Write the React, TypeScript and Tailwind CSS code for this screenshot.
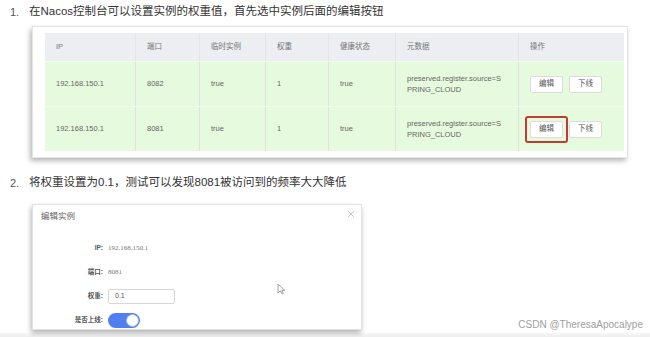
import clsx from "clsx";

const cn = clsx;

const COLS = [
  { title: "IP", w: "w-[91px]" },
  { title: "端口", w: "w-[64px]" },
  { title: "临时实例", w: "w-[66px]" },
  { title: "权重", w: "w-[63px]" },
  { title: "健康状态", w: "w-[67px]" },
  { title: "元数据", w: "w-[123px]" },
  { title: "操作", w: "w-[105px]" },
];

const ROWS = [
  { ip: "192.168.150.1", port: "8082", highlight: false },
  { ip: "192.168.150.1", port: "8081", highlight: true },
];

const SANS = "font-['Microsoft_YaHei','Liberation_Sans','Noto_Sans_CJK_SC',sans-serif]";

function Cell({ w, children, className }: { w: string; children?: React.ReactNode; className?: string }) {
  return (
    <div className={cn("flex items-center pl-[11px] border-r border-[#dde3dc] last:border-r-0 shrink-0", w, className)}>
      {children}
    </div>
  );
}

function SmallButton({ label }: { label: string }) {
  return (
    <div className="w-[33px] h-[17px] bg-white border border-[#dcdcdc] rounded-[2px] flex items-center justify-center text-[7.5px] text-[#555]">
      {label}
    </div>
  );
}

function InstanceTable() {
  return (
    <div className="ml-[32px] mt-[2px] w-[596px] h-[132px] bg-white border border-[#e4e4e4] shadow-[-2px_3px_5px_rgba(0,0,0,0.28)] pl-[12px] pt-[6px]">
      <div className="w-[579px] text-[7.5px] text-[#666]">
        <div className="flex h-[28px] bg-[#eceef1]">
          {COLS.map((c) => (
            <Cell key={c.title} w={c.w} className="border-[#e2e4e7] text-[#777]">
              {c.title}
            </Cell>
          ))}
        </div>
        {ROWS.map((r, i) => (
          <div key={i} className="flex h-[45px] bg-[#e6fbdd] border-t border-[#f2fbee]">
            <Cell w={COLS[0].w}>{r.ip}</Cell>
            <Cell w={COLS[1].w}>{r.port}</Cell>
            <Cell w={COLS[2].w}>true</Cell>
            <Cell w={COLS[3].w}>1</Cell>
            <Cell w={COLS[4].w}>true</Cell>
            <Cell w={COLS[5].w} className="leading-[11px]">
              <div>
                preserved.register.source=S
                <br />
                PRING_CLOUD
              </div>
            </Cell>
            <Cell w={COLS[6].w}>
              <div className="flex gap-[6px]">
                {r.highlight ? (
                  <div className="-m-[5px] p-[3px] border-2 border-[#c23a33] rounded-[3px]">
                    <SmallButton label="编辑" />
                  </div>
                ) : (
                  <SmallButton label="编辑" />
                )}
                <SmallButton label="下线" />
              </div>
            </Cell>
          </div>
        ))}
      </div>
    </div>
  );
}

function FormRow({ label, children }: { label: string; children: React.ReactNode }) {
  return (
    <div className="flex items-center h-[24px] shrink-0">
      <div className="w-[70px] text-right text-[6.5px] font-bold text-[#555]">{label}</div>
      <div className="ml-[5px] flex items-center">{children}</div>
    </div>
  );
}

function EditDialog() {
  return (
    <div className="ml-[32px] w-[330px] h-[126px] bg-white border border-[#e2e2e2] shadow-[-1px_3px_5px_rgba(0,0,0,0.3)] flex flex-col overflow-hidden relative">
      <div className="h-[22px] flex items-center justify-between pl-[8px] pr-[6px] shrink-0">
        <span className="text-[8.5px] text-[#666]">编辑实例</span>
        <svg width="8" height="8" viewBox="0 0 8 8" className="-mt-[5px]">
          <path d="M1 1L7 7M7 1L1 7" stroke="#c8c8c8" strokeWidth="1" />
        </svg>
      </div>
      <div className="h-[9px] shrink-0" />
      <FormRow label="IP:">
        <span className="text-[7px] text-[#777] font-['Liberation_Serif',serif]">192.168.150.1</span>
      </FormRow>
      <FormRow label="端口:">
        <span className="text-[7px] text-[#777] font-['Liberation_Serif',serif]">8081</span>
      </FormRow>
      <FormRow label="权重:">
        <div className="w-[67px] h-[15px] border border-[#d6d6d6] rounded-[2px] flex items-center pl-[6px] text-[7px] text-[#555]">
          0.1
        </div>
      </FormRow>
      <FormRow label="是否上线:">
        <div className="w-[32px] h-[15px] rounded-full bg-[#4f7ff0] flex items-center justify-end pr-[1px]">
          <div className="w-[13px] h-[13px] rounded-full bg-white border border-[#9eb7f0]" />
        </div>
      </FormRow>
      <svg
        width="9"
        height="12"
        viewBox="0 0 9 12"
        className="absolute left-[244px] top-[78px]"
      >
        <path d="M1 1L1 10L3.3 7.8L5 11L6.3 10.4L4.7 7.3L7.8 7.3Z" fill="white" stroke="#8a8a8a" strokeWidth="0.8" strokeLinejoin="round" />
      </svg>
    </div>
  );
}

export default function App() {
  return (
    <div className={cn("w-[650px] h-[337px] bg-white flex flex-col overflow-hidden", SANS)}>
      <div className="h-[24px] flex items-center shrink-0 text-[11.5px] text-[#333]">
        <span className="w-[29px] pl-[10px] text-[11px] text-[#555]">1.</span>
        <span>在Nacos控制台可以设置实例的权重值，首先选中实例后面的编辑按钮</span>
      </div>
      <InstanceTable />
      <div className="h-[46px] pt-[17px] flex items-start shrink-0 text-[11.5px] text-[#333]">
        <div className="flex items-center h-[16px]">
          <span className="w-[29px] pl-[10px] text-[11px] text-[#555]">2.</span>
          <span>将权重设置为0.1，测试可以发现8081被访问到的频率大大降低</span>
        </div>
      </div>
      <div className="flex items-end shrink-0">
        <EditDialog />
        <div className="ml-auto mr-[7px] mb-[-2px] text-[10px] text-[#a0a0a0] font-['Liberation_Sans',sans-serif]">
          CSDN @TheresaApocalype
        </div>
      </div>
      <div className="flex-1 mt-[3px] bg-gradient-to-b from-[#f7f7f7] to-[#eeeeee]" />
    </div>
  );
}
